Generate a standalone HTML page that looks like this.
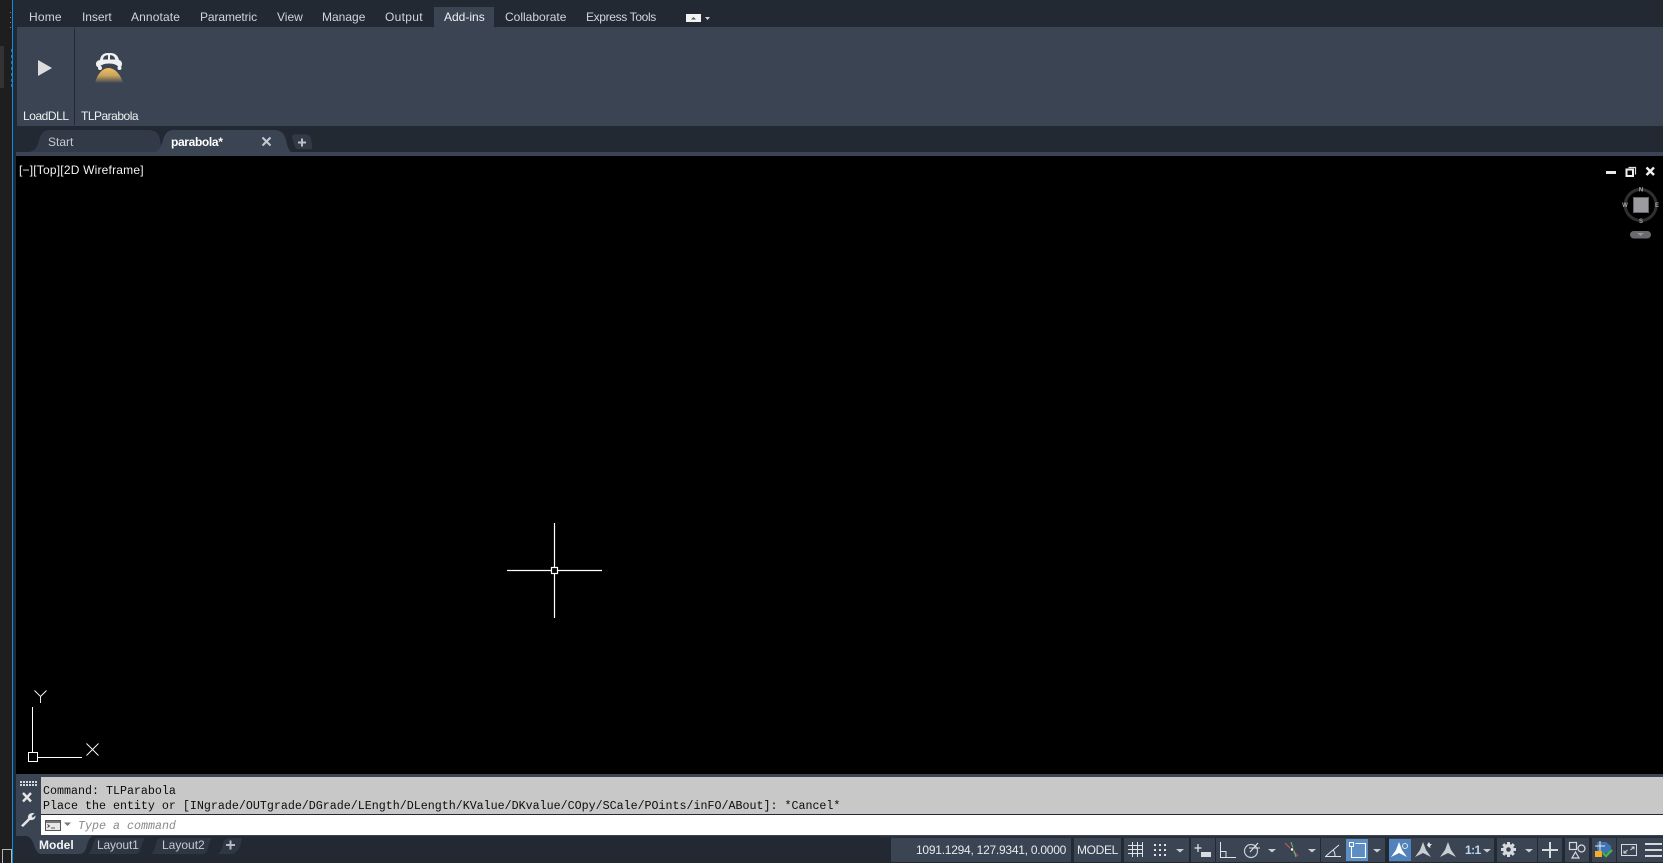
<!DOCTYPE html>
<html>
<head>
<meta charset="utf-8">
<style>
html,body{margin:0;padding:0;background:#000;width:1663px;height:863px;overflow:hidden}
body{position:relative;font-family:"Liberation Sans",sans-serif}
.t{position:absolute;font-size:12px;line-height:14px;color:#ced5dd;white-space:nowrap}
.m{position:absolute;font-family:"Liberation Mono",monospace;font-size:11.67px;line-height:14px;color:#0c0c0c;white-space:pre}
svg{position:absolute;left:0;top:0}
</style>
</head>
<body>
<svg width="1663" height="863" viewBox="0 0 1663 863" shape-rendering="geometricPrecision">
<defs>
<linearGradient id="hill" x1="0" y1="0" x2="0" y2="1">
<stop offset="0" stop-color="#f3bf5f"/><stop offset=".5" stop-color="#c9a45c"/><stop offset="1" stop-color="#3f4652"/>
</linearGradient>
</defs>
<!-- base -->
<rect x="0" y="0" width="1663" height="863" fill="#222933"/>
<rect x="0" y="0" width="12" height="863" fill="#1e1e1e"/>
<rect x="0" y="46" width="4" height="42" fill="#333333"/>
<rect x="12" y="0" width="1" height="863" fill="#0a8fdc"/>
<g fill="#7c8088"><rect x="10" y="12" width="1" height="1"/><rect x="10" y="17" width="1" height="1"/><rect x="10" y="22" width="1" height="1"/><rect x="10" y="27" width="1" height="1"/></g>
<g fill="#1577b5"><rect x="11" y="49" width="1" height="3"/><rect x="11" y="55" width="1" height="3"/><rect x="11" y="61" width="1" height="3"/><rect x="11" y="67" width="1" height="3"/><rect x="11" y="73" width="1" height="3"/><rect x="11" y="79" width="1" height="3"/><rect x="11" y="84" width="1" height="3"/></g>
<!-- ribbon -->
<rect x="17" y="27" width="1646" height="99" fill="#3b4453"/>
<rect x="74" y="28" width="1" height="97" fill="#232a35"/>
<rect x="434" y="7" width="60" height="20" fill="#3b4453"/>
<rect x="686" y="14" width="15" height="8" fill="#f2f2f2"/>
<path d="M691 19.500l2.500-2.500 2.500 2.500z" fill="#555"/>
<path d="M705 17h5l-2.500 3z" fill="#d5d8dc"/>
<!-- play -->
<path d="M38 60L52 68L38 76z" fill="#dcdcdc"/>
<!-- TLParabola icon -->
<path d="M95 83c2-8 7-15 13.500-15S121 75 123 83z" fill="url(#hill)"/>
<path d="M100 60c.5-4.500 3.500-7 7.500-7h3c4.500 0 7.500 2.500 8.500 7 2 .5 3 2 3 4 0 2-1 3-3 3.500-1.500-2.500-5-4-10-4s-8.500 1.500-10 4c-2-.5-3-1.500-3-3.500 0-2 1-3.500 4-4z" fill="#f0f0f0"/>
<path d="M103 59.500c.3-2.500 1.500-4 4-4.300h1v4.300zM110 55.200h1c2.500.3 3.700 1.800 4.300 4.300h-5.300z" fill="#3b4453"/>
<circle cx="100" cy="68" r="2" fill="#f0f0f0"/>
<circle cx="119.500" cy="68" r="2" fill="#f0f0f0"/>
<!-- file tabs -->
<rect x="16" y="152" width="1647" height="4" fill="#3b4453"/>
<path d="M28 152c8-1 9-5 11-12 2-7 5-10 11-10h98c8 0 11 4 12 10l2 12z" fill="#323a48"/>
<path d="M292 137c0-2 1-2.500 3-2.500h11c4 0 6 4 6 14.500h-14c-3 0-4-6-6-12z" fill="#323a48"/>
<path d="M152 153c6-1 9-5 11-13 2-7 5-10 11-10h100c7 0 10 3 12 10 1 5 2 9 5 12z" fill="#3b4453"/>
<path d="M262.500 137.500l8 8M270.500 137.500l-8 8" stroke="#c5cad0" stroke-width="2"/>
<path d="M298 142.500h8M302 138.500v8" stroke="#b9bfc7" stroke-width="2"/>
<!-- viewport -->
<rect x="16" y="156" width="1647" height="618" fill="#000"/>
<!-- viewport controls -->
<rect x="1606" y="171" width="10" height="3" fill="#e8e8e8"/>
<path d="M1628.500 167.500h7v7" fill="none" stroke="#ddd" stroke-width="1.200"/>
<rect x="1626.500" y="169.500" width="6.500" height="6.500" fill="#000" stroke="#eee" stroke-width="2"/>
<path d="M1646.500 167.500l7.500 7.500M1654 167.500l-7.500 7.500" stroke="#eee" stroke-width="2.400"/>
<!-- viewcube -->
<circle cx="1640.700" cy="205" r="15.500" fill="none" stroke="#303030" stroke-width="3"/>
<rect x="1633.500" y="197.500" width="15" height="15" fill="#9c9ca0" stroke="#666" stroke-width="1"/>
<g font-family="Liberation Sans,sans-serif" font-size="6" font-weight="bold" fill="#a6a6a6" text-anchor="middle">
<text x="1641" y="191.500">N</text>
<text x="1641" y="223">S</text>
<text x="1625" y="207">W</text>
<text x="1657" y="207">E</text>
</g>
<rect x="1630" y="231" width="21" height="7.500" rx="3.700" fill="#6a6a6e"/>
<path d="M1637 233h7l-3.500 3z" fill="#96969a"/>
<!-- crosshair -->
<path d="M507 570.500h44.500M558 570.500h44M554.500 523v44M554.500 574v44" stroke="#fff" stroke-width="1.200"/>
<rect x="551.500" y="567.500" width="6" height="6" fill="none" stroke="#fff" stroke-width="1.200"/>
<!-- UCS -->
<path d="M32.500 707v45M38 757.500h44" stroke="#fff" stroke-width="1"/>
<rect x="28.500" y="752.500" width="9" height="9" fill="none" stroke="#fff" stroke-width="1"/>
<path d="M86.500 743.500l12 12M98.500 743.500l-12 12M34.500 690.500l6 6 6-6M40.500 696.500v6.500" fill="none" stroke="#fff" stroke-width=".9"/>
<!-- command -->
<rect x="16" y="774" width="1647" height="62" fill="#3b4453"/>
<rect x="41" y="777" width="1622" height="37" fill="#c8c8c8"/>
<rect x="41" y="814" width="1622" height="1" fill="#222933"/>
<rect x="41" y="815" width="1622" height="20" fill="#fff"/>
<g fill="#d6d8dc">
<rect x="20" y="781" width="2" height="2"/><rect x="23" y="781" width="2" height="2"/><rect x="26" y="781" width="2" height="2"/><rect x="29" y="781" width="2" height="2"/><rect x="32" y="781" width="2" height="2"/><rect x="35" y="781" width="2" height="2"/>
<rect x="20" y="784" width="2" height="2"/><rect x="23" y="784" width="2" height="2"/><rect x="26" y="784" width="2" height="2"/><rect x="29" y="784" width="2" height="2"/><rect x="32" y="784" width="2" height="2"/><rect x="35" y="784" width="2" height="2"/>
</g>
<path d="M23 793l8 8.500M31 793l-8 8.500" stroke="#e6e6e6" stroke-width="2.400"/>
<path d="M21 825.500L28 818.500C27.500 815.500 29 813 33 813L34.500 813.300 31.500 816 32.800 817.800 35.500 815.500C35.800 818.500 33.500 820.500 30 820L23 827z" fill="#e6e6e6"/>
<rect x="45.500" y="820.500" width="15" height="10" fill="#e8e8e8" stroke="#555" stroke-width="1"/>
<rect x="46" y="821" width="14" height="2" fill="#777"/>
<path d="M47.500 824.500l2 1.500-2 1.500M51 828h4" fill="none" stroke="#333" stroke-width=".8"/>
<path d="M64 822.500h7l-3.500 3.500z" fill="#777"/>
<!-- layout tabs -->
<path d="M27 836h65c-2 2-4 5-5 9-1.500 6-3 9-8 9H42c-5 0-6-4-8-9-1-4-4-8-7-9z" fill="#3b4453"/>
<path d="M88 854c3-2 4-6 5-10 1-4 2-6 6-6h46c-2 3-3 6-4 10-1 4-3 6-6 6z" fill="#2f3744"/>
<path d="M151 854c3-2 4-6 5-10 1-4 2-6 6-6h50c-2 3-3 6-4 10-1 4-3 6-6 6z" fill="#2f3744"/>
<path d="M218 854c3-2 4-6 5-10 1-4 2-6 6-6h13c-1 8-4 16-12 16z" fill="#2f3744"/>
<path d="M226 845h9M230.500 840.500v9" stroke="#b4bac2" stroke-width="2"/>
<!-- bottom-left square -->
<path d="M2.500 863v-13.500h9.500M11.500 850v13" fill="none" stroke="#b6b6b6" stroke-width="1"/>
<!-- status bar segments -->
<rect x="880" y="836" width="783" height="1.500" fill="#2b323d"/>
<g fill="#3b4453">
<rect x="891" y="838" width="180" height="24"/>
<rect x="1074" y="838" width="47" height="24"/>
<rect x="1124" y="838" width="65" height="24"/>
<rect x="1191" y="838" width="24" height="24"/>
<rect x="1216" y="838" width="104" height="24"/>
<rect x="1321" y="838" width="64" height="24"/>
<rect x="1389" y="838" width="105" height="24"/>
<rect x="1497" y="838" width="40" height="24"/>
<rect x="1538" y="838" width="24" height="24"/>
<rect x="1565" y="838" width="24" height="24"/>
<rect x="1592" y="838" width="24" height="24"/>
<rect x="1617" y="838" width="46" height="24"/>
</g>
<!-- grid -->
<path d="M1132.500 842v15M1137.500 842v15M1142.500 842v15M1128 845.500h15M1128 849.500h15M1128 853.500h15" stroke="#dfe3e8" stroke-width="1"/>
<!-- snap dots -->
<g fill="#dfe3e8">
<rect x="1154" y="844" width="2" height="2"/><rect x="1159" y="844" width="2" height="2"/><rect x="1164" y="844" width="2" height="2"/>
<rect x="1154" y="849" width="2" height="2"/><rect x="1159" y="849" width="2" height="2"/><rect x="1164" y="849" width="2" height="2"/>
<rect x="1154" y="854" width="2" height="2"/><rect x="1159" y="854" width="2" height="2"/><rect x="1164" y="854" width="2" height="2"/>
</g>
<path d="M1176 849h8l-4 3.500z" fill="#c9ced4"/>
<!-- dyn input -->
<path d="M1198 844v8M1194.500 848h7" stroke="#e3e6ea" stroke-width="1.200"/>
<rect x="1201" y="852" width="10" height="5" fill="#d9dce1"/>
<!-- ortho -->
<path d="M1220.500 842v15.500h15.500M1220.500 851.500h5.500v6" fill="none" stroke="#dfe3e8" stroke-width="1"/>
<!-- polar -->
<circle cx="1251" cy="851" r="6.500" fill="none" stroke="#c9ced4" stroke-width="1.200"/>
<path d="M1250 852l8-9M1249 848h11" fill="none" stroke="#dfe3e8" stroke-width="1.100"/>
<path d="M1268 849h8l-4 3.500z" fill="#c9ced4"/>
<!-- osnap -->
<path d="M1285 843l13 13" stroke="#d8555b" stroke-width="1"/>
<path d="M1291 842l5 15" stroke="#6fc36f" stroke-width="1"/>
<rect x="1290.500" y="848" width="3" height="3" fill="#fff" stroke="#222" stroke-width=".6"/>
<path d="M1308 849h8l-4 3.500z" fill="#c9ced4"/>
<!-- angle -->
<path d="M1325 856.500h16M1326 856l13-11" fill="none" stroke="#dfe3e8" stroke-width="1.100"/>
<path d="M1333 850c1.500 1.500 2 4 2 6" fill="none" stroke="#dfe3e8" stroke-width="1"/>
<!-- active selection box -->
<rect x="1346" y="839" width="22" height="22" fill="#5c8ec3"/>
<path d="M1351.500 845.500v12h14v-14h-10" fill="none" stroke="#fff" stroke-width="1.100"/>
<rect x="1349.500" y="842.500" width="4" height="4" fill="#5c8ec3" stroke="#fff" stroke-width="1"/>
<path d="M1373 849h8l-4 3.500z" fill="#c9ced4"/>
<!-- annotation visibility -->
<rect x="1389" y="839" width="22" height="22" fill="#5083bd"/>
<path d="M1399 842l3 8 5 7-8-4-8 4 5-7z" fill="#fff"/>
<circle cx="1405" cy="846" r="2.500" fill="#5083bd" stroke="#e6e6e6" stroke-width="1"/>
<path d="M1423 842l3 8 5 7-8-4-8 4 5-7z" fill="#c9ced4"/>
<path d="M1427 845l2-3 1 2 2 0-2 2 .5 2-2-1z" fill="#e6e6e6"/>
<path d="M1448 842l3 8 5 7-8-4-8 4 5-7z" fill="#c9ced4"/>
<path d="M1483 849h8l-4 3.500z" fill="#c9ced4"/>
<!-- gear -->
<g fill="#d6d9de">
<circle cx="1508.500" cy="849.500" r="5.500"/>
<rect x="1507" y="842" width="3" height="15"/>
<rect x="1501" y="848" width="15" height="3"/>
<rect x="1507" y="842" width="3" height="15" transform="rotate(45 1508.500 849.500)"/>
<rect x="1507" y="842" width="3" height="15" transform="rotate(-45 1508.500 849.500)"/>
</g>
<circle cx="1508.500" cy="849.500" r="2.300" fill="#3b4453"/>
<path d="M1525 849h8l-4 3.500z" fill="#c9ced4"/>
<!-- plus -->
<path d="M1542 850h16M1550 842v16" stroke="#d6d9de" stroke-width="2"/>
<!-- shapes -->
<rect x="1569.500" y="842.500" width="7" height="7" fill="none" stroke="#d6d9de" stroke-width="1.200"/>
<circle cx="1581.500" cy="848.500" r="3.500" fill="none" stroke="#d6d9de" stroke-width="1.200"/>
<path d="M1575.500 852l3.500 6h-7z" fill="none" stroke="#d6d9de" stroke-width="1.200"/>
<!-- colored status icon -->
<path d="M1597 842h9l5 4v7h-14z" fill="#3f74b4"/>
<rect x="1595" y="851" width="7" height="6" fill="#f1ae2c"/>
<path d="M1600 841v10M1595 846h10" stroke="#e8e8e8" stroke-width="1"/>
<path d="M1603 853l3 3 6-6" fill="none" stroke="#46b04a" stroke-width="2.400"/>
<!-- fullscreen -->
<rect x="1621.500" y="844.500" width="15" height="11" fill="none" stroke="#d6d9de" stroke-width="1"/>
<path d="M1624 853l3.500-3M1624 850.500v2.500h2.500M1634 847l-3.500 3M1631.500 847h2.500v2.500" fill="none" stroke="#d6d9de" stroke-width="1"/>
<!-- hamburger -->
<path d="M1645 844h17M1645 850h17M1645 856h17" stroke="#d6d9de" stroke-width="2"/>
</svg>

<!-- ribbon tab text -->
<div class="t" style="left:29px;top:10px;letter-spacing:.2px">Home</div>
<div class="t" style="left:82px;top:10px;letter-spacing:-.05px">Insert</div>
<div class="t" style="left:131px;top:10px;letter-spacing:.12px">Annotate</div>
<div class="t" style="left:200px;top:10px;letter-spacing:-.1px">Parametric</div>
<div class="t" style="left:277px;top:10px">View</div>
<div class="t" style="left:322px;top:10px">Manage</div>
<div class="t" style="left:385px;top:10px;letter-spacing:.3px">Output</div>
<div class="t" style="left:444px;top:10px;color:#eef1f4">Add-ins</div>
<div class="t" style="left:505px;top:10px">Collaborate</div>
<div class="t" style="left:586px;top:10px;letter-spacing:-.35px">Express Tools</div>
<!-- ribbon labels -->
<div class="t" style="left:23px;top:109px;color:#eef0f3;letter-spacing:-.45px">LoadDLL</div>
<div class="t" style="left:81px;top:109px;color:#eef0f3;letter-spacing:-.5px">TLParabola</div>
<!-- file tabs -->
<div class="t" style="left:48px;top:135px;color:#c4cad2">Start</div>
<div class="t" style="left:171px;top:135px;color:#fff;font-weight:bold;letter-spacing:-.35px">parabola*</div>
<!-- viewport label -->
<div class="t" style="left:19px;top:163px;color:#f2f2f2;letter-spacing:.2px">[−][Top][2D Wireframe]</div>
<!-- command -->
<div class="m" style="left:43px;top:784px">Command: TLParabola</div>
<div class="m" style="left:43px;top:799px">Place the entity or [INgrade/OUTgrade/DGrade/LEngth/DLength/KValue/DKvalue/COpy/SCale/POints/inFO/ABout]: *Cancel*</div>
<div class="m" style="left:78px;top:819px;color:#8a8a8a;font-style:italic">Type a command</div>
<!-- layout tabs -->
<div class="t" style="left:39px;top:838px;color:#f2f4f6;font-weight:bold">Model</div>
<div class="t" style="left:97px;top:838px;color:#c4cad2;letter-spacing:-.15px">Layout1</div>
<div class="t" style="left:162px;top:838px;color:#c4cad2">Layout2</div>
<!-- status text -->
<div class="t" style="left:916px;top:843px;color:#e6eaee;letter-spacing:-.25px">1091.1294, 127.9341, 0.0000</div>
<div class="t" style="left:1077px;top:843px;color:#e6eaee;letter-spacing:-.35px">MODEL</div>
<div class="t" style="left:1465px;top:843px;color:#bcd8f0;letter-spacing:-.6px;font-weight:bold">1:1</div>
</body>
</html>
